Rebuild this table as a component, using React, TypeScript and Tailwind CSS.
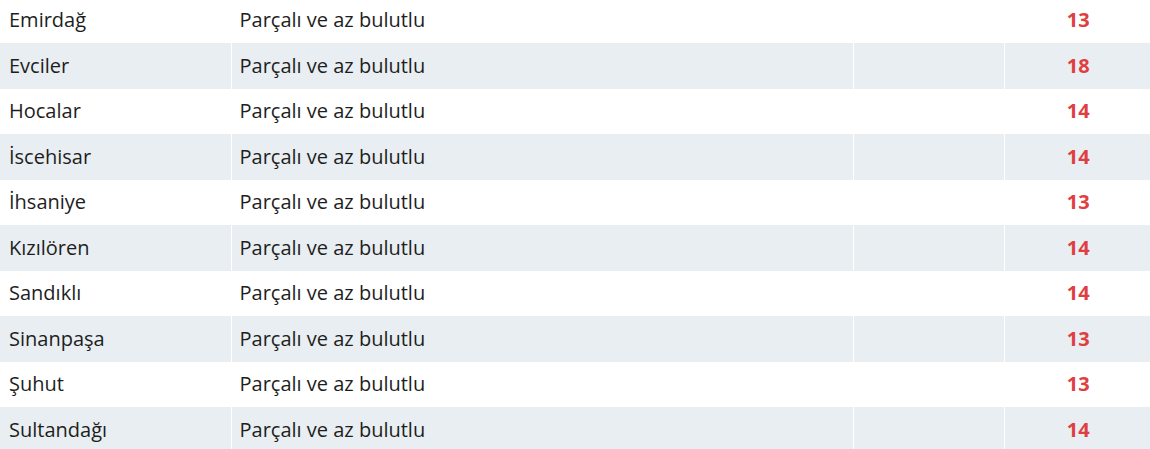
const rows: [string, string, number][] = [
  ['Emirdağ', 'Parçalı ve az bulutlu', 13],
  ['Evciler', 'Parçalı ve az bulutlu', 18],
  ['Hocalar', 'Parçalı ve az bulutlu', 14],
  ['İscehisar', 'Parçalı ve az bulutlu', 14],
  ['İhsaniye', 'Parçalı ve az bulutlu', 13],
  ['Kızılören', 'Parçalı ve az bulutlu', 14],
  ['Sandıklı', 'Parçalı ve az bulutlu', 14],
  ['Sinanpaşa', 'Parçalı ve az bulutlu', 13],
  ['Şuhut', 'Parçalı ve az bulutlu', 13],
  ['Sultandağı', 'Parçalı ve az bulutlu', 14],
];

export default function App() {
  return (
    <div className="h-[449px] w-[1150px] overflow-hidden bg-white font-['Open_Sans',sans-serif]">
      <table className="-mt-[2.5px] w-[1150px] table-fixed border-collapse text-[20px] text-[#1e1e1e]">
        <colgroup>
          <col className="w-[231px]" />
          <col className="w-[622px]" />
          <col className="w-[151px]" />
          <col />
        </colgroup>
        <tbody>
          {rows.map(([name, desc, temp], i) => (
            <tr key={name} className={i % 2 === 1 ? 'bg-[#e8eef1]' : 'bg-white'}>
              <td className="h-[45.5px] border-r border-white pl-[9px] align-middle">{name}</td>
              <td className="h-[45.5px] border-r border-white pl-[8px] align-middle">{desc}</td>
              <td className="h-[45.5px] border-r border-white" />
              <td className="h-[45.5px] pl-[2px] text-center align-middle font-bold text-[#e03e40]">{temp}</td>
            </tr>
          ))}
        </tbody>
      </table>
    </div>
  );
}
